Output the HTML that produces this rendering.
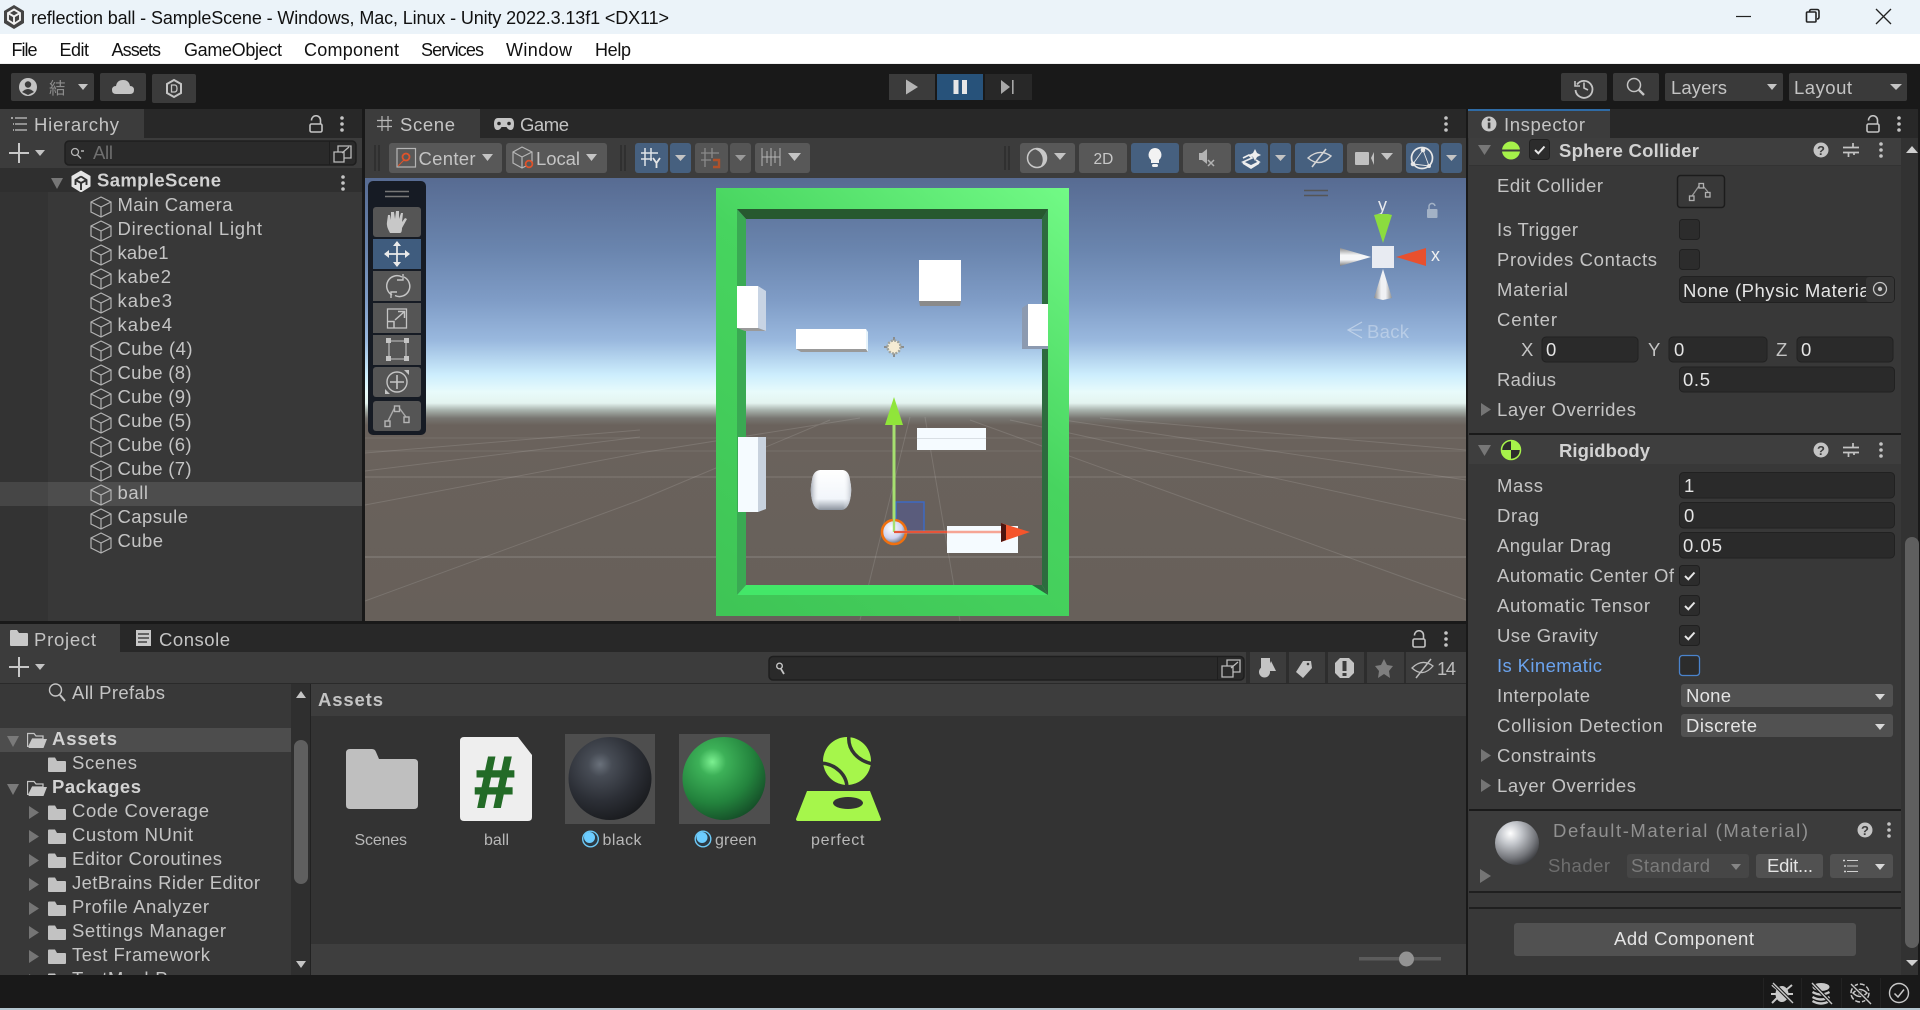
<!DOCTYPE html>
<html lang="en"><head><meta charset="utf-8"><title>reflection ball - SampleScene - Unity</title>
<style>
html,body{margin:0;padding:0;width:1920px;height:1010px;overflow:hidden;background:#191919}
svg{display:block;position:absolute;left:0;top:0}
text{font-family:"Liberation Sans","Noto Sans CJK JP",sans-serif;font-size:18.5px;fill:#c4c4c4}
.m{fill:#111;font-size:18px}
.b{font-weight:bold;fill:#d2d2d2}
.s{font-size:16px}
.w{fill:#e4e4e4}
.d{fill:#b8b8b8}
</style></head><body>
<svg width="1920" height="1010" viewBox="0 0 1920 1010" xmlns="http://www.w3.org/2000/svg">
<defs>
<linearGradient id="sky" gradientUnits="userSpaceOnUse" x1="0" y1="178" x2="0" y2="621">
<stop offset="0" stop-color="#576b92"/><stop offset=".163" stop-color="#6a85ae"/><stop offset=".276" stop-color="#7f9cc6"/><stop offset=".366" stop-color="#99b8de"/><stop offset=".445" stop-color="#cdeefd"/><stop offset=".483" stop-color="#e8fbfb"/><stop offset=".508" stop-color="#e4f4f0"/><stop offset=".524" stop-color="#a8b2ac"/><stop offset=".542" stop-color="#787671"/><stop offset=".558" stop-color="#6a625c"/><stop offset="1" stop-color="#67605a"/>
</linearGradient>
<linearGradient id="fr" gradientUnits="userSpaceOnUse" x1="730" y1="610" x2="1069" y2="188"><stop offset="0" stop-color="#3fc556"/><stop offset=".55" stop-color="#47d45f"/><stop offset="1" stop-color="#72fa86"/></linearGradient>
<radialGradient id="bk" cx=".38" cy=".33" r=".8"><stop offset="0" stop-color="#6a717b"/><stop offset=".18" stop-color="#474c55"/><stop offset=".55" stop-color="#2c2f36"/><stop offset="1" stop-color="#131416"/></radialGradient>
<radialGradient id="gr" cx=".36" cy=".3" r=".82"><stop offset="0" stop-color="#7cf091"/><stop offset=".2" stop-color="#3db158"/><stop offset=".6" stop-color="#23833d"/><stop offset="1" stop-color="#113f22"/></radialGradient>
<radialGradient id="mt" cx=".35" cy=".28" r=".82"><stop offset="0" stop-color="#fff"/><stop offset=".3" stop-color="#c4c7cc"/><stop offset=".7" stop-color="#74767b"/><stop offset="1" stop-color="#2d2e31"/></radialGradient>
<linearGradient id="cap" x1="0" y1="0" x2="0" y2="1"><stop offset="0" stop-color="#fff"/><stop offset=".72" stop-color="#f2f6fb"/><stop offset="1" stop-color="#8c949e"/></linearGradient>
<linearGradient id="capx" x1="0" y1="0" x2="1" y2="0"><stop offset="0" stop-color="#9aa0ab" stop-opacity=".9"/><stop offset=".22" stop-color="#fff" stop-opacity="0"/><stop offset=".8" stop-color="#fff" stop-opacity="0"/><stop offset="1" stop-color="#aab0bb" stop-opacity=".7"/></linearGradient>
<radialGradient id="bl" cx=".4" cy=".35" r=".7"><stop offset="0" stop-color="#fff"/><stop offset=".6" stop-color="#cdd2ee"/><stop offset="1" stop-color="#58606a"/></radialGradient>
<linearGradient id="cg" x1="0" y1="0" x2="0" y2="1"><stop offset="0" stop-color="#8b8b8b"/><stop offset=".4" stop-color="#f5f6f8"/><stop offset=".65" stop-color="#f5f6f8"/><stop offset="1" stop-color="#7e7e7e"/></linearGradient>
<linearGradient id="cg2" x1="0" y1="0" x2="1" y2="0"><stop offset="0" stop-color="#8b8b8b"/><stop offset=".4" stop-color="#f0f1f4"/><stop offset=".65" stop-color="#f0f1f4"/><stop offset="1" stop-color="#8e8e8e"/></linearGradient>
<clipPath id="tree"><rect x="0" y="684" width="291" height="291"/></clipPath>
<clipPath id="mat"><rect x="1679" y="276" width="187" height="27"/></clipPath>
<symbol id="cube" width="22" height="22" viewBox="0 0 22 22" overflow="visible"><path d="M11 1L21 6V16L11 21L1 16V6ZM1 6L11 11L21 6M11 11V21" fill="none" stroke="#b2b2b2" stroke-width="1.2"/></symbol>
<symbol id="fold" width="18" height="15" viewBox="0 0 18 15"><path d="M0 1.5Q0 .5 1 .5H7L9 4H17Q18 4 18 5V14Q18 15 17 15H1Q0 15 0 14Z" fill="#c2c2c2"/></symbol>
<symbol id="fopen" width="20" height="16" viewBox="0 0 20 16"><path d="M.5 15V1.5H7L9 4H16V7H5.5L1.5 15" fill="none" stroke="#c4c4c4" stroke-width="1.3"/><path d="M1.5 16L5 7H20L16.5 16Z" fill="#c8c8c8"/></symbol>
<symbol id="keb" width="6" height="18" viewBox="0 0 6 18"><circle cx="3" cy="3" r="1.8" fill="#c4c4c4"/><circle cx="3" cy="9" r="1.8" fill="#c4c4c4"/><circle cx="3" cy="15" r="1.8" fill="#c4c4c4"/></symbol>
<symbol id="lock" width="14" height="18" viewBox="0 0 14 18"><rect x="1" y="9" width="12" height="8" rx="1.5" fill="none" stroke="#c4c4c4" stroke-width="1.6"/><path d="M2.5 5.5A4.5 4.5 0 0 1 11.5 5V9" fill="none" stroke="#c4c4c4" stroke-width="1.6"/></symbol>
<symbol id="sl" width="16" height="16" viewBox="0 0 16 16"><path d="M0 5.5H16M0 10.5H16M10 1V5.5M5.5 10.5V15M11 10.5V13" fill="none" stroke="#c4c4c4" stroke-width="1.7"/></symbol>
<symbol id="chk" width="21" height="21" viewBox="0 0 21 21"><rect x=".5" y=".5" width="20" height="20" rx="3" fill="#2c2c2c" stroke="#202020"/><path d="M6 11L9.3 14.3L15.5 7.5" fill="none" stroke="#e6e6e6" stroke-width="2"/></symbol>
<symbol id="unchk" width="21" height="21" viewBox="0 0 21 21"><rect x=".5" y=".5" width="20" height="20" rx="3" fill="#2c2c2c" stroke="#202020"/></symbol>
</defs>

<!-- title bar -->
<rect width="1920" height="34" fill="#ebf3f9"/>
<path d="M14 5L24 11V23L14 29L4 23V11Z" fill="#444"/><path d="M14 9.5L20 13V20L14 24L8 20V13ZM8 13L14 16.5L20 13M14 16.5V24" fill="none" stroke="#f2f2f2" stroke-width="1.9"/>
<text class="m" x="31" y="24" textLength="638">reflection ball - SampleScene - Windows, Mac, Linux - Unity 2022.3.13f1 &lt;DX11&gt;</text>
<path d="M1736 16.5H1751" stroke="#222" stroke-width="1.2"/>
<path d="M1806.5 13Q1806.5 12 1807.5 12H1815Q1816 12 1816 13V21Q1816 22 1815 22H1807.5Q1806.5 22 1806.5 21ZM1809.5 11.5Q1809.5 9.5 1811.5 9.5H1817Q1819 9.5 1819 11.5V17Q1819 19 1817 19" fill="none" stroke="#222" stroke-width="1.6"/>
<path d="M1876 9L1891 24M1891 9L1876 24" stroke="#222" stroke-width="1.3"/>

<!-- menu -->
<rect y="34" width="1920" height="29" fill="#fff"/><rect y="63" width="1920" height="1" fill="#f0f0f0"/>
<text class="m" x="11.5" y="56" textLength="26">File</text>
<text class="m" x="59.5" y="56" textLength="29.5">Edit</text>
<text class="m" x="111.5" y="56" textLength="49.5">Assets</text>
<text class="m" x="184" y="56" textLength="98">GameObject</text>
<text class="m" x="304" y="56" textLength="95">Component</text>
<text class="m" x="421" y="56" textLength="63">Services</text>
<text class="m" x="506" y="56" textLength="66">Window</text>
<text class="m" x="595" y="56" textLength="36">Help</text>

<!-- toolbar -->
<rect y="64" width="1920" height="45" fill="#191919"/>
<rect x="11" y="73" width="83" height="28" rx="2" fill="#3b3b3b"/>
<circle cx="28" cy="87" r="9" fill="#c4c4c4"/><circle cx="28" cy="84.5" r="3.2" fill="#3b3b3b"/><path d="M22 92Q28 86 34 92L28 95Z" fill="#3b3b3b"/>
<text x="49" y="94" textLength="17" style="fill:#8c8c8c;font-size:16.5px">結</text>
<path d="M78 84H88L83 90Z" fill="#c4c4c4"/>
<rect x="100" y="73" width="46" height="28" rx="2" fill="#3b3b3b"/>
<path d="M116 94Q112 94 112 90Q112 86 116 86Q117 80 123 80Q129 80 130 86Q134 86 134 90Q134 94 130 94Z" fill="#c4c4c4"/>
<rect x="152" y="74" width="44" height="29" rx="2" fill="#3b3b3b"/>
<path d="M174 80L181 84V93L174 97L167 93V84Z" fill="none" stroke="#c4c4c4" stroke-width="2"/><path d="M171.5 85H174.5Q177 85 177 88.5Q177 92 174.5 92H171.5Z" fill="none" stroke="#c4c4c4" stroke-width="1.3"/>

<rect x="889" y="74" width="46" height="26" fill="#3b3b3b"/><path d="M906 79.5V94.5L918 87Z" fill="#b4b4b4"/>
<rect x="937" y="74" width="46" height="26" fill="#27527a"/><rect x="953.5" y="80" width="5" height="14" fill="#e6e6e6"/><rect x="962" y="80" width="5" height="14" fill="#e6e6e6"/>
<rect x="985" y="74" width="47" height="26" fill="#282828"/><path d="M1001 80V94L1010 87Z" fill="#a8a8a8"/><rect x="1012" y="80" width="1.6" height="14" fill="#a8a8a8"/>

<rect x="1561" y="73" width="46" height="28" rx="2" fill="#3a3a3a"/>
<path d="M1577 84.5A8.5 8.5 0 1 1 1575.5 90" fill="none" stroke="#c4c4c4" stroke-width="1.8"/><path d="M1575 81V86H1580" fill="none" stroke="#c4c4c4" stroke-width="1.6"/><path d="M1584 82.5V88L1588 90" fill="none" stroke="#c4c4c4" stroke-width="1.6"/>
<rect x="1613" y="73" width="46" height="28" rx="2" fill="#3a3a3a"/>
<circle cx="1634" cy="85" r="6.5" fill="none" stroke="#c4c4c4" stroke-width="1.5"/><path d="M1639 90L1644 95" stroke="#c4c4c4" stroke-width="2.4"/>
<rect x="1665" y="73" width="118" height="28" rx="2" fill="#3a3a3a"/><text x="1671" y="94" textLength="56">Layers</text><path d="M1767 84H1777L1772 90Z" fill="#c4c4c4"/>
<rect x="1789" y="73" width="118" height="28" rx="2" fill="#3a3a3a"/><text x="1794" y="94" textLength="58">Layout</text><path d="M1890 84H1902L1896 90Z" fill="#c4c4c4"/>

<!-- hierarchy -->
<rect x="0" y="109" width="362" height="29" fill="#282828"/>
<rect x="0" y="109" width="144" height="29" fill="#3c3c3c"/>
<path d="M15 118H27M15 124H27M15 130H27" stroke="#c4c4c4" stroke-width="1.2"/><path d="M11 118H13M13 124H14M13 130H14" stroke="#c4c4c4" stroke-width="1.6"/>
<text x="34" y="131" textLength="85">Hierarchy</text>
<use href="#lock" x="309" y="115"/><use href="#keb" x="339" y="115"/>
<rect y="138" width="362" height="30" fill="#3c3c3c"/>
<path d="M9 153H29M19 143V163" stroke="#c8c8c8" stroke-width="2"/><path d="M35 150H45L40 156Z" fill="#c4c4c4"/>
<rect x="65" y="141" width="291" height="24" rx="4" fill="#2a2a2a" stroke="#1e1e1e" stroke-width="1.5"/>
<circle cx="75" cy="152" r="3.5" fill="none" stroke="#b5b5b5" stroke-width="1.3"/><path d="M77.5 155L81 158.5M81 151H84" stroke="#b5b5b5" stroke-width="1.4"/>
<text x="93" y="159" textLength="20" style="fill:#6f6f6f">All</text>
<rect x="329" y="141" width="1" height="24" fill="#1e1e1e"/>
<path d="M338 146H351V158H344V152H338ZM334 152H344V162H334Z M342 153L349 147" fill="none" stroke="#bbb" stroke-width="1.3"/>
<rect y="168" width="362" height="24" fill="#2f2f2f"/>
<path d="M51 178H63L57 189Z" fill="#777"/>
<path d="M81 170.5L90.5 176V186.5L81 192.5L71.5 186.5V176Z" fill="#e4e4e4"/><path d="M81 176.5L75.5 180V185M81 176.5L86.5 180V185M75.5 180L81 183L86.5 180M81 183V190" fill="none" stroke="#2f2f2f" stroke-width="1.9"/>
<text class="b" x="97" y="186.5" textLength="124">SampleScene</text>
<use href="#keb" x="340" y="174"/>
<rect y="192" width="362" height="429" fill="#383838"/><rect y="192" width="48" height="429" fill="#333"/>
<rect y="482" width="362" height="24" fill="#4d4d4d"/><rect y="482" width="48" height="24" fill="#464646"/>
<use href="#cube" x="90" y="196"/><text x="117.5" y="211" textLength="115">Main Camera</text>
<use href="#cube" x="90" y="220"/><text x="117.5" y="235" textLength="144.5">Directional Light</text>
<use href="#cube" x="90" y="244"/><text x="117.5" y="259" textLength="51">kabe1</text>
<use href="#cube" x="90" y="268"/><text x="117.5" y="283" textLength="53.5">kabe2</text>
<use href="#cube" x="90" y="292"/><text x="117.5" y="307" textLength="54.5">kabe3</text>
<use href="#cube" x="90" y="316"/><text x="117.5" y="331" textLength="54.5">kabe4</text>
<use href="#cube" x="90" y="340"/><text x="117.5" y="355" textLength="75">Cube (4)</text>
<use href="#cube" x="90" y="364"/><text x="117.5" y="379" textLength="74">Cube (8)</text>
<use href="#cube" x="90" y="388"/><text x="117.5" y="403" textLength="74">Cube (9)</text>
<use href="#cube" x="90" y="412"/><text x="117.5" y="427" textLength="74">Cube (5)</text>
<use href="#cube" x="90" y="436"/><text x="117.5" y="451" textLength="74">Cube (6)</text>
<use href="#cube" x="90" y="460"/><text x="117.5" y="475" textLength="74">Cube (7)</text>
<use href="#cube" x="90" y="484"/><text x="117.5" y="499" textLength="30.5">ball</text>
<use href="#cube" x="90" y="508"/><text x="117.5" y="523" textLength="70.5">Capsule</text>
<use href="#cube" x="90" y="532"/><text x="117.5" y="547" textLength="45.5">Cube</text>

<!-- scene tabs -->
<rect x="365" y="109" width="1101" height="29" fill="#282828"/>
<rect x="365" y="109" width="115" height="29" fill="#3c3c3c"/>
<path d="M382 116V131M388 116V131M377 120.5H392M377 126.5H392" stroke="#b8b8b8" stroke-width="1.2"/>
<text x="400" y="131" textLength="55">Scene</text>
<path d="M498 118H510Q514 118 514 124Q514 130 510.5 130Q508 130 506.5 127H501.5Q500 130 497.5 130Q494 130 494 124Q494 118 498 118Z" fill="#c4c4c4"/><circle cx="499" cy="123.5" r="1.8" fill="#282828"/><circle cx="509" cy="123.5" r="1.8" fill="#282828"/>
<text x="520" y="131" textLength="49">Game</text>
<use href="#keb" x="1443" y="115"/>

<!-- scene toolbar -->
<rect x="365" y="138" width="1101" height="40" fill="#3c3c3c"/>
<path d="M375 145V171M379 145V171M621 145V171M625 145V171M1005 146V170M1009 146V170" stroke="#2d2d2d" stroke-width="1.5"/>
<rect x="389" y="143" width="113" height="30" rx="3" fill="#585858"/>
<rect x="397" y="148.5" width="18.5" height="18.5" fill="none" stroke="#b5b5b5" stroke-width="1.2"/><circle cx="406" cy="157" r="3.5" fill="none" stroke="#e0532a" stroke-width="1.8"/><path d="M398 166L404 160" stroke="#e0532a" stroke-width="1.1"/>
<text x="418.5" y="165" textLength="57">Center</text><path d="M482 154H493L487.5 161Z" fill="#c4c4c4"/>
<rect x="506" y="143" width="101" height="30" rx="3" fill="#585858"/>
<path d="M522 147L532 152V163L522 168L513 163V152ZM513 152L522 157L532 152M522 157V168" fill="none" stroke="#b5b5b5" stroke-width="1.2"/><circle cx="529" cy="164" r="3.4" fill="#585858" stroke="#e0532a" stroke-width="1.7"/>
<text x="536" y="165" textLength="44">Local</text><path d="M586 154H597L591.5 161Z" fill="#c4c4c4"/>

<rect x="635" y="143" width="33" height="30" rx="3" fill="#46607f"/><rect x="670" y="143" width="21" height="30" rx="3" fill="#46607f"/>
<path d="M645 148V166M651 148V161M641 153H658M641 159H652" stroke="#dfe4e9" stroke-width="1.5"/><path d="M653 158L656.5 163L660 158M656.5 163V168" fill="none" stroke="#e6e6e6" stroke-width="1.8"/>
<path d="M675 155H686L680.5 161Z" fill="#c4c4c4"/>
<rect x="695" y="143" width="33" height="30" rx="3" fill="#555"/><rect x="730" y="143" width="21" height="30" rx="3" fill="#555"/>
<path d="M705 148V167M712 148V158M701 153H719M701 160H711" stroke="#8a8a8a" stroke-width="1.3"/><path d="M713 160H719V167H713" fill="none" stroke="#b0512a" stroke-width="2.4"/>
<path d="M735 155H746L740.5 161Z" fill="#9a9a9a"/>
<rect x="755" y="143" width="55" height="30" rx="3" fill="#585858"/>
<path d="M762 148V166M767 151V163M771 148V166M775 151V163M780 148V166M762 157H780" stroke="#b5b5b5" stroke-width="1"/><path d="M788 153H801L794.5 161Z" fill="#c4c4c4"/>

<rect x="1020" y="143" width="55" height="30" rx="3" fill="#585858"/><circle cx="1037" cy="158" r="9.5" fill="none" stroke="#c8c8c8" stroke-width="1.5"/><path d="M1034 149A9.5 9.5 0 0 1 1040 167A11 11 0 0 0 1034 149Z" fill="#c8c8c8"/><path d="M1054 153H1066L1060 160Z" fill="#c4c4c4"/>
<rect x="1079" y="143" width="48" height="30" rx="3" fill="#585858"/><text x="1093.5" y="164" style="fill:#c8c8c8;font-size:15.5px">2D</text>
<rect x="1131" y="143" width="48" height="30" rx="3" fill="#46607f"/><path d="M1155 148A6.8 6.8 0 0 1 1159 160V163H1151V160A6.8 6.8 0 0 1 1155 148Z" fill="#f2f2f2"/><rect x="1152" y="164" width="6" height="3" rx="1.5" fill="#f2f2f2"/>
<rect x="1183" y="143" width="48" height="30" rx="3" fill="#585858"/><path d="M1199 153H1202L1207 149V164L1202 160H1199Z" fill="#b3b3b3"/><path d="M1208 160L1214 166M1214 160L1208 166" stroke="#b3b3b3" stroke-width="1.5"/>
<rect x="1235" y="143" width="33" height="30" rx="3" fill="#46607f"/><rect x="1270" y="143" width="21" height="30" rx="3" fill="#46607f"/>
<path d="M1255 149L1257 153L1261 155L1257 157L1255 161L1253 157L1249 155L1253 153Z" fill="#eee"/><path d="M1243 158L1249 155L1252 158L1243 162L1251 166L1259 162L1256 160M1243 163L1251 168L1259 163" fill="none" stroke="#eee" stroke-width="1.7"/>
<path d="M1275 155H1286L1280.5 161Z" fill="#c4c4c4"/>
<rect x="1295" y="143" width="48" height="30" rx="3" fill="#46607f"/><path d="M1308 158Q1319 148 1331 156Q1320 168 1308 158Z" fill="none" stroke="#d6d6d6" stroke-width="1.4"/><path d="M1312 167L1326 149" stroke="#d6d6d6" stroke-width="1.6"/>
<rect x="1347" y="143" width="55" height="30" rx="3" fill="#585858"/><rect x="1355" y="152" width="14" height="13" rx="1" fill="#c0c0c0"/><path d="M1371 158L1374 152V165Z" fill="#c0c0c0"/><path d="M1381 153H1393L1387 160Z" fill="#c4c4c4"/>
<rect x="1406" y="143" width="33" height="30" rx="3" fill="#46607f"/><rect x="1441" y="143" width="21" height="30" rx="3" fill="#46607f"/>
<circle cx="1422" cy="158" r="10.5" fill="none" stroke="#e8e8e8" stroke-width="1.7"/><path d="M1423 150L1413 164L1429 166L1423 150" fill="none" stroke="#e8e8e8" stroke-width=".9"/><circle cx="1423" cy="150" r="2.3" fill="#e8e8e8"/><circle cx="1413" cy="164" r="2.3" fill="#e8e8e8"/><circle cx="1429" cy="166" r="2" fill="#e8e8e8"/>
<path d="M1446 155H1457L1451.5 161Z" fill="#c4c4c4"/>

<!-- scene view -->
<rect x="365" y="178" width="1101" height="443" fill="url(#sky)"/>
<g stroke="#fff" stroke-opacity=".12" stroke-width="1" fill="none">
<path d="M365 453L640 430M365 471L640 437M365 505L640 453L860 418M365 601L640 500L830 420M860 620L910 417"/>
<path d="M1466 450L1100 418M1466 480L1050 418M1466 520L1010 420M1466 600L970 420M960 621L925 417"/>
<path d="M365 438H1466M365 451H1466" stroke-opacity=".09"/>
<path d="M365 477H1466" stroke-opacity=".13" stroke-width="1.2"/>
<path d="M365 557H1466" stroke-opacity=".13" stroke-width="1.8"/>
</g>
<!-- back walls -->
<polygon points="737,209 1048,209 1042,219 746,219" fill="#27592f"/>
<polygon points="737,209 746,219 746,585 737,595" fill="#3aa953"/>
<polygon points="1048,209 1042,219 1042,585 1048,595" fill="#2d6b3e"/>
<polygon points="737,595 746,585 1042,585 1048,595" fill="#43e768"/>
<polygon points="1032,585 1042,585 1048,595" fill="#2d6b3e"/>
<path d="M716 188H1069V616H716ZM737 209V595H1048V209Z" fill="url(#fr)" fill-rule="evenodd"/>
<!-- cubes -->
<polygon points="919,301 961,301 960,306 920,306" fill="#8a8a8a"/><rect x="919" y="260" width="42" height="41" fill="#fff"/>
<polygon points="758,286 766,291 766,331 758,328" fill="#c8d4e4"/><polygon points="737,328 758,328 766,331 745,331" fill="#9a9a9a"/><rect x="737" y="286" width="21" height="42" fill="#fff"/>
<polygon points="1028,304 1022,308 1022,349 1048,349 1048,346 1028,346" fill="#8c9ab0"/><rect x="1028" y="304" width="20" height="42" fill="#fff"/>
<polygon points="796,349 866,349 868,352 801,352" fill="#999"/><polygon points="866,329 868,332 868,352 866,349" fill="#e6f3fb"/><rect x="796" y="329" width="70" height="20" fill="#fff"/>
<rect x="917" y="428" width="69" height="22" fill="#f5fbff"/><rect x="917" y="438" width="69" height="1" fill="#d9dfe4"/>
<polygon points="758,437 766,437 766,509 758,512" fill="#c8d2de"/><rect x="738" y="437" width="20" height="75" fill="#f5fbff"/>
<path id="capsule" d="M820 470H843Q849 471 850 480Q852.5 490 850 500Q848 509 842 510H820Q814 509 812 500Q809.5 490 812 480Q813 471 820 470Z" fill="url(#cap)"/>
<path d="M820 470H843Q849 471 850 480Q852.5 490 850 500Q848 509 842 510H820Q814 509 812 500Q809.5 490 812 480Q813 471 820 470Z" fill="url(#capx)"/>
<rect x="947" y="526" width="71" height="27" fill="#f5fbff"/>
<!-- sun -->
<g stroke="#8a8d8e" stroke-width="2"><path d="M894 337V342M894 352V357M884 347H889M899 347H904"/></g><circle cx="894" cy="347" r="6.5" fill="#f5ecd4" stroke="#9fa39d" stroke-width="2.4" stroke-dasharray="2 1.4"/>
<!-- move gizmo -->
<rect x="896" y="502" width="28" height="30" fill="#5a5c7c" stroke="#3a6ac8" stroke-width="1.4"/>
<path d="M894 532V425" stroke="#a6e070" stroke-width="3"/>
<polygon points="894,397 903,425 885,425" fill="#90e53a"/>
<circle cx="894" cy="532" r="12" fill="url(#bl)" stroke="#f0700f" stroke-width="2.6"/>
<path d="M894 532V512" stroke="#a6e070" stroke-width="2.4"/>
<path d="M894 532H1002" stroke="#f6a595" stroke-width="2.6"/><path d="M894 532H947" stroke="#e5553a" stroke-width="2"/>
<polygon points="1001,523 1030,532 1001,542" fill="#f4552c"/><polygon points="1001,523 1006,525 1006,540 1001,542" fill="#4d1510"/>
<!-- tool panel -->
<rect x="368" y="181" width="58" height="254" rx="5" fill="#161b24"/>
<path d="M385 191.5H409M385 196.5H409" stroke="#777" stroke-width="1.4"/>
<rect x="373" y="207" width="48" height="30" rx="3" fill="#555"/><rect x="373" y="239" width="48" height="30" fill="#3f5c7e"/><rect x="373" y="271" width="48" height="30" fill="#555"/><rect x="373" y="303" width="48" height="30" fill="#555"/><rect x="373" y="335" width="48" height="30" fill="#555"/><rect x="373" y="367" width="48" height="30" rx="3" fill="#555"/><rect x="373" y="401" width="48" height="30" rx="3" fill="#555"/>
<path d="M390 233Q386 226 387 222L388 215L390 215L391 220L391 212L394 212L395 219L396 211L399 211L399 219L401 213L403 213L402 222L405 218L407 219L402 228Q402 233 400 233Z" fill="#c8c8c8"/>
<g fill="none" stroke="#eaeaea" stroke-width="1.7"><path d="M385 254H409M397 242V266"/></g><path d="M397 241L393 246H401ZM397 267L393 262H401ZM384 254L389 250V258ZM410 254L405 250V258Z" fill="#eaeaea"/>
<path d="M402 277A10 10 0 0 0 392 295" fill="none" stroke="#c4c4c4" stroke-width="1.5"/><path d="M393 295.5A10 10 0 0 0 402 277" fill="none" stroke="#c4c4c4" stroke-width="1.5" transform="translate(2 0)"/><path d="M403 274V280H397M391 298V292H397" fill="none" stroke="#c4c4c4" stroke-width="1.4"/>
<rect x="387.5" y="309" width="19" height="19" fill="none" stroke="#c4c4c4" stroke-width="1.3"/><path d="M387.5 321.5H394V328M395 320L404 312M398 311.5H404.5V318" fill="none" stroke="#c4c4c4" stroke-width="1.5"/>
<path d="M389 341H406V359H389Z" fill="none" stroke="#c4c4c4" stroke-width="1.1"/><g fill="#c4c4c4"><rect x="386" y="338" width="5" height="5"/><rect x="404" y="338" width="5" height="5"/><rect x="386" y="356" width="5" height="5"/><rect x="404" y="356" width="5" height="5"/></g>
<circle cx="397" cy="382" r="10" fill="none" stroke="#c4c4c4" stroke-width="1.4"/><path d="M390 382H404M397 375V389" stroke="#c4c4c4" stroke-width="1.6"/><path d="M385 394L390 394L385 389ZM409 370L404 370L409 375Z" fill="#c4c4c4"/>
<path d="M388 421L394 409H400L406 417" fill="none" stroke="#a8a8a8" stroke-width="1.4"/><g fill="#555" stroke="#b5b5b5" stroke-width="1.4"><rect x="385" y="421" width="5" height="5.5"/><rect x="394.5" y="406" width="5" height="5.5"/><rect x="404" y="417" width="5" height="5.5"/></g>
<!-- scene gizmo -->
<path d="M1304 190.5H1328M1304 195.5H1328" stroke="#555" stroke-width="1.4"/>
<text x="1378" y="211" textLength="9" style="fill:#e8eaee;font-size:18px">y</text>
<text x="1431" y="261" textLength="9" style="fill:#f0f0f0;font-size:18px">x</text>
<rect x="1427" y="209" width="10.5" height="9" rx="1" fill="#a3b2c6"/><path d="M1429 209V207A3 3 0 0 1 1435 206" fill="none" stroke="#a3b2c6" stroke-width="1.5"/>
<polygon points="1383,243 1392,215 1388,214 1378,214 1374,215" fill="#8bdc3f"/>
<polygon points="1396,257 1426,248 1426,266" fill="#e8502e"/>
<polygon points="1371,257 1340,248 1340,266" fill="url(#cg)"/>
<polygon points="1383,269 1392,298 1383,300 1374,298" fill="url(#cg2)"/>
<rect x="1372" y="246" width="22" height="22" fill="#e8ebf2"/>
<path d="M1362 322L1348 330L1362 338M1348 330H1362" fill="none" stroke="#fff" stroke-opacity=".4" stroke-width="1.2"/>
<text x="1367" y="338" textLength="42" style="fill:#fff;fill-opacity:.33">Back</text>

<!-- project -->
<rect y="624" width="1466" height="28" fill="#282828"/>
<rect y="624" width="120" height="28" fill="#3c3c3c"/>
<path d="M10 631Q10 630 11 630H17L19 633H27Q28 633 28 634V645Q28 646 27 646H11Q10 646 10 645Z" fill="#c8c8c8"/>
<text x="34" y="646" textLength="62">Project</text>
<rect x="136" y="630" width="15" height="16" fill="#c8c8c8"/><path d="M138 634H149M138 638H149M138 642H147" stroke="#282828" stroke-width="1.2"/>
<text x="159" y="646" textLength="71">Console</text>
<use href="#lock" x="1412" y="630"/><use href="#keb" x="1443" y="630"/>
<rect y="652" width="1466" height="31" fill="#3c3c3c"/><rect y="683" width="1466" height="1" fill="#2a2a2a"/>
<path d="M9 667H29M19 657V677" stroke="#c8c8c8" stroke-width="2"/><path d="M35 664H45L40 670Z" fill="#c4c4c4"/>
<rect x="769" y="656.5" width="475" height="23.5" rx="4" fill="#2a2a2a" stroke="#1e1e1e" stroke-width="1.5"/>
<circle cx="779.5" cy="666" r="2.8" fill="none" stroke="#c4c4c4" stroke-width="1.4"/><path d="M781 669L784 674" stroke="#c4c4c4" stroke-width="1.8"/>
<rect x="1217" y="657" width="1" height="23" fill="#1e1e1e"/>
<path d="M1227 660H1240V672H1233V666H1227ZM1222 666H1233V677H1222ZM1231 668L1238 662" fill="none" stroke="#bbb" stroke-width="1.3"/>
<rect x="1246" y="652" width="4" height="31" fill="#2d2d2d"/><rect x="1286" y="652" width="3" height="31" fill="#2d2d2d"/><rect x="1325" y="652" width="3" height="31" fill="#2d2d2d"/><rect x="1364" y="652" width="3" height="31" fill="#2d2d2d"/><rect x="1404" y="652" width="2" height="31" fill="#2d2d2d"/>
<rect x="1261" y="658" width="9" height="11" fill="#c4c4c4"/><circle cx="1264.5" cy="672" r="5.5" fill="#c4c4c4"/><path d="M1271 661L1276 671H1267Z" fill="#c4c4c4"/>
<path d="M1303 661L1311 661L1312 668L1303 678L1296 672Z" fill="#c4c4c4"/><circle cx="1308" cy="664" r="1.3" fill="#3c3c3c"/>
<path d="M1340 658H1349L1354 663V673L1349 678H1340L1335 673V663Z" fill="#c4c4c4"/><rect x="1342.5" y="661" width="4" height="10" fill="#3c3c3c"/><rect x="1342.5" y="673" width="4" height="3" fill="#3c3c3c"/>
<path d="M1384 659L1387 665L1393 666L1389 671L1390 678L1384 674L1378 678L1379 671L1375 666L1381 665Z" fill="#7e7e7e"/>
<path d="M1412 668Q1422 658 1433 666Q1423 678 1412 668Z" fill="none" stroke="#bbb" stroke-width="1.3"/><path d="M1416 678L1431 659" stroke="#bbb" stroke-width="1.5"/>
<text x="1437" y="675" textLength="19" style="fill:#bcbcbc">14</text>

<rect y="684" width="291" height="291" fill="#383838"/>
<rect x="291" y="684" width="19" height="291" fill="#2f2f2f"/>
<rect x="294" y="740" width="14" height="144" rx="7" fill="#5f5f5f"/>
<path d="M301 691L296 698H306ZM296 961H306L301 968Z" fill="#c4c4c4"/>
<rect x="310" y="684" width="1" height="291" fill="#222"/>
<rect x="311" y="684" width="1155" height="32" fill="#3d3d3d"/>
<text class="b" x="318" y="706" textLength="65" style="fill:#c4c4c4">Assets</text>
<rect x="311" y="716" width="1155" height="228" fill="#333"/>
<rect x="311" y="944" width="1155" height="31" fill="#3e3e3e"/>

<circle cx="55.5" cy="690" r="6" fill="none" stroke="#c4c4c4" stroke-width="1.4"/><path d="M60 695L65 701" stroke="#c4c4c4" stroke-width="2"/>
<text x="72" y="699" textLength="93">All Prefabs</text>
<rect y="728" width="291" height="24" fill="#4d4d4d"/>
<path d="M7 736H19L13 747Z" fill="#7a7a7a"/><use href="#fopen" x="27" y="732"/>
<text class="b" x="52" y="745" textLength="65">Assets</text>
<use href="#fold" x="48" y="757"/><text x="72" y="769" textLength="65">Scenes</text>
<path d="M7 784H19L13 795Z" fill="#7a7a7a"/><use href="#fopen" x="27" y="780"/>
<text class="b" x="52" y="793" textLength="89">Packages</text>
<g fill="#757575"><path d="M29 806V819L39 812.5Z"/><path d="M29 830V843L39 836.5Z"/><path d="M29 854V867L39 860.5Z"/><path d="M29 878V891L39 884.5Z"/><path d="M29 902V915L39 908.5Z"/><path d="M29 926V939L39 932.5Z"/><path d="M29 950V963L39 956.5Z"/></g>
<use href="#fold" x="48" y="805"/><text x="72" y="817" textLength="137">Code Coverage</text>
<use href="#fold" x="48" y="829"/><text x="72" y="841" textLength="121">Custom NUnit</text>
<use href="#fold" x="48" y="853"/><text x="72" y="865" textLength="150">Editor Coroutines</text>
<use href="#fold" x="48" y="877"/><text x="72" y="889" textLength="188">JetBrains Rider Editor</text>
<use href="#fold" x="48" y="901"/><text x="72" y="913" textLength="137">Profile Analyzer</text>
<use href="#fold" x="48" y="925"/><text x="72" y="937" textLength="154">Settings Manager</text>
<use href="#fold" x="48" y="949"/><text x="72" y="961" textLength="138">Test Framework</text>
<g clip-path="url(#tree)"><path d="M29 974V987L39 980.5Z" fill="#757575"/><use href="#fold" x="48" y="973"/><text x="72" y="985" textLength="113">TextMeshPro</text></g>

<path d="M346 753Q346 749 350 749H372Q375 749 376 752L379 759H414Q418 759 418 763V805Q418 809 414 809H350Q346 809 346 805Z" fill="#bfbfbf"/>
<text class="s d" x="354.5" y="845" textLength="52.5">Scenes</text>
<path d="M464 737H518L532 755V817Q532 821 528 821H464Q460 821 460 817V741Q460 737 464 737Z" fill="#eee"/>
<text x="494.5" y="807" text-anchor="middle" stroke="#236b27" stroke-width="2" style="fill:#236b27;font-weight:bold;font-size:72px">#</text>
<text class="s d" x="484" y="845" textLength="25">ball</text>
<rect x="565" y="734" width="90" height="90" fill="#4e4e4e"/><circle cx="610" cy="778.5" r="41.5" fill="url(#bk)"/>
<circle cx="590.5" cy="839" r="7.8" fill="#2c3a44" stroke="#6cc8f5" stroke-width="1.4"/><circle cx="589.5" cy="837.5" r="5.5" fill="#6ccdff"/>
<text class="s d" x="602.5" y="845" textLength="39">black</text>
<rect x="679" y="734" width="91" height="90" fill="#4e4e4e"/><circle cx="724" cy="778.5" r="41.5" fill="url(#gr)"/>
<circle cx="703" cy="839" r="7.8" fill="#2c3a44" stroke="#6cc8f5" stroke-width="1.4"/><circle cx="702" cy="837.5" r="5.5" fill="#6ccdff"/>
<text class="s d" x="715" y="845" textLength="41.5">green</text>
<circle cx="847" cy="761" r="24" fill="#a6f64b"/>
<path d="M849 735C847 750 858 761 873 764M821 763C836 764 847 775 847 788" fill="none" stroke="#333" stroke-width="3.5"/>
<path d="M807 791H870L881 819Q881 821 879 821H798Q796 821 796 819Z" fill="#a6f64b"/><ellipse cx="848" cy="803" rx="15" ry="6" fill="#333"/>
<text class="s d" x="811" y="845" textLength="53.5">perfect</text>
<rect x="1359" y="957" width="82" height="3.5" fill="#5c5c5c"/><ellipse cx="1406.5" cy="959" rx="7.5" ry="7.5" fill="#939393"/>

<!-- inspector -->
<rect x="1468" y="109" width="450" height="29" fill="#282828"/>
<rect x="1468" y="110" width="142" height="28" fill="#3c3c3c"/><rect x="1468" y="109" width="142" height="2" fill="#2f6ba5"/>
<circle cx="1489" cy="124" r="7.5" fill="#c8c8c8"/><rect x="1487.8" y="122.5" width="2.6" height="6" fill="#3c3c3c"/><circle cx="1489" cy="119.8" r="1.5" fill="#3c3c3c"/>
<text x="1504" y="131" textLength="81">Inspector</text>
<use href="#lock" x="1866" y="115"/><use href="#keb" x="1896" y="115"/>
<rect x="1468" y="138" width="433" height="837" fill="#383838"/>
<rect x="1901" y="138" width="17" height="837" fill="#323232"/>
<path d="M1912 146L1906 153H1918ZM1906 960H1918L1912 966Z" fill="#d0d0d0"/>
<rect x="1905" y="537" width="14" height="411" rx="7" fill="#5f5f5f"/>

<rect x="1469" y="138" width="432" height="27" fill="#3e3e3e"/><rect x="1469" y="165" width="432" height="1" fill="#333"/>
<path d="M1478 145H1491L1484.5 155Z" fill="#777"/>
<circle cx="1511" cy="150.5" r="9" fill="#a6f24a"/><path d="M1502 150.5H1520" stroke="#3e3e3e" stroke-width="2"/>
<use href="#chk" x="1529" y="139"/>
<text class="b" x="1559" y="157" textLength="140">Sphere Collider</text>
<circle cx="1821" cy="150" r="7.5" fill="#c4c4c4"/><text x="1821" y="155" text-anchor="middle" style="fill:#3e3e3e;font-weight:bold;font-size:13px">?</text>
<use href="#sl" x="1843" y="142"/><use href="#keb" x="1878" y="141"/>

<text x="1497" y="192" textLength="106">Edit Collider</text>
<rect x="1677.5" y="175.5" width="47" height="32" rx="3" fill="#383838" stroke="#1c1c1c" stroke-width="1.5"/>
<path d="M1692 196L1699 186H1703L1708 192" fill="none" stroke="#999" stroke-width="1.3"/><g fill="#383838" stroke="#b0b0b0" stroke-width="1.3"><rect x="1689.5" y="196" width="4.5" height="4.5"/><rect x="1699" y="183.5" width="4.5" height="4.5"/><rect x="1705.5" y="192.5" width="4.5" height="4.5"/></g>
<text x="1497" y="236" textLength="81">Is Trigger</text><use href="#unchk" x="1679" y="219"/>
<text x="1497" y="266" textLength="160">Provides Contacts</text><use href="#unchk" x="1679" y="249"/>
<text x="1497" y="296" textLength="71">Material</text>
<rect x="1679.5" y="276.5" width="215" height="26" rx="4" fill="#2a2a2a" stroke="#212121"/>
<text class="w" clip-path="url(#mat)" x="1683" y="297" textLength="198">None (Physic Material)</text>
<rect x="1866" y="277" width="28" height="25" rx="3" fill="#363636"/><circle cx="1880" cy="289" r="6.5" fill="none" stroke="#c4c4c4" stroke-width="1.3"/><circle cx="1880" cy="289" r="2.2" fill="#c4c4c4"/>
<text x="1497" y="326" textLength="60">Center</text>
<text x="1521" y="356" textLength="12">X</text><rect x="1542" y="337" width="96" height="25" rx="4" fill="#2a2a2a" stroke="#212121"/><text class="w" x="1546" y="356" textLength="10">0</text>
<text x="1648" y="356" textLength="11">Y</text><rect x="1669" y="337" width="98" height="25" rx="4" fill="#2a2a2a" stroke="#212121"/><text class="w" x="1674" y="356" textLength="10">0</text>
<text x="1776" y="356" textLength="11">Z</text><rect x="1797" y="337" width="96" height="25" rx="4" fill="#2a2a2a" stroke="#212121"/><text class="w" x="1801" y="356" textLength="10">0</text>
<text x="1497" y="386" textLength="59">Radius</text>
<rect x="1679.5" y="367" width="215" height="25" rx="4" fill="#2a2a2a" stroke="#212121"/><text class="w" x="1683" y="386" textLength="27">0.5</text>
<path d="M1481 403V416L1491 409.5Z" fill="#757575"/><text x="1497" y="416" textLength="139">Layer Overrides</text>
<rect x="1469" y="433" width="432" height="2" fill="#1a1a1a"/>

<rect x="1469" y="435" width="432" height="29" fill="#3e3e3e"/>
<path d="M1478 445H1491L1484.5 456Z" fill="#777"/>
<circle cx="1511" cy="450" r="9" fill="#292929" stroke="#a6f24a" stroke-width="2"/><path d="M1511 441A9 9 0 0 1 1520 450H1511ZM1511 459A9 9 0 0 1 1502 450H1511Z" fill="#a6f24a"/><path d="M1511 441A9 9 0 0 0 1502 450H1511ZM1511 459A9 9 0 0 0 1520 450H1511Z" fill="#2c2c2c"/><circle cx="1511" cy="450" r="9.5" fill="none" stroke="#a6f24a" stroke-width="1.5"/>
<text class="b" x="1559" y="457" textLength="91">Rigidbody</text>
<circle cx="1821" cy="450" r="7.5" fill="#c4c4c4"/><text x="1821" y="455" text-anchor="middle" style="fill:#3e3e3e;font-weight:bold;font-size:13px">?</text>
<use href="#sl" x="1843" y="442"/><use href="#keb" x="1878" y="441"/>

<text x="1497" y="492" textLength="46">Mass</text><rect x="1679.5" y="472.5" width="215" height="25.5" rx="4" fill="#2a2a2a" stroke="#212121"/><text class="w" x="1684" y="492" textLength="8">1</text>
<text x="1497" y="522" textLength="42">Drag</text><rect x="1679.5" y="502.5" width="215" height="25.5" rx="4" fill="#2a2a2a" stroke="#212121"/><text class="w" x="1684" y="522" textLength="10">0</text>
<text x="1497" y="552" textLength="114">Angular Drag</text><rect x="1679.5" y="532.5" width="215" height="25.5" rx="4" fill="#2a2a2a" stroke="#212121"/><text class="w" x="1683" y="552" textLength="39">0.05</text>
<text x="1497" y="582" textLength="177">Automatic Center Of</text><use href="#chk" x="1679" y="565"/>
<text x="1497" y="612" textLength="153">Automatic Tensor</text><use href="#chk" x="1679" y="595"/>
<text x="1497" y="642" textLength="101">Use Gravity</text><use href="#chk" x="1679" y="625"/>
<text x="1497" y="672" textLength="105" style="fill:#6ba3ee">Is Kinematic</text><rect x="1679.5" y="655.5" width="20" height="20" rx="3" fill="#2c2c2c" stroke="#4a83cc" stroke-width="1.3"/>
<text x="1497" y="702" textLength="93">Interpolate</text>
<rect x="1681" y="684" width="212" height="23" rx="3" fill="#515151"/><text class="w" x="1686" y="702" textLength="45">None</text><path d="M1875 694H1885L1880 700Z" fill="#d8d8d8"/>
<text x="1497" y="732" textLength="166">Collision Detection</text>
<rect x="1681" y="714" width="212" height="23" rx="3" fill="#515151"/><text class="w" x="1686" y="732" textLength="71">Discrete</text><path d="M1875 724H1885L1880 730Z" fill="#d8d8d8"/>
<path d="M1481 749V762L1491 755.5Z" fill="#757575"/><text x="1497" y="762" textLength="99">Constraints</text>
<path d="M1481 779V792L1491 785.5Z" fill="#757575"/><text x="1497" y="792" textLength="139">Layer Overrides</text>
<rect x="1469" y="809" width="432" height="2" fill="#1a1a1a"/>
<rect x="1469" y="811" width="432" height="80" fill="#3c3c3c"/>
<circle cx="1517" cy="843" r="22" fill="url(#mt)"/>
<text x="1553" y="837" textLength="255" style="fill:#919191">Default-Material (Material)</text>
<circle cx="1865" cy="830" r="7.5" fill="#c4c4c4"/><text x="1865" y="835" text-anchor="middle" style="fill:#3c3c3c;font-weight:bold;font-size:13px">?</text>
<use href="#keb" x="1886" y="821"/>
<path d="M1480 869V883L1491 876Z" fill="#757575"/>
<text x="1548" y="872" textLength="62" style="fill:#6e6e6e">Shader</text>
<rect x="1627" y="854" width="122" height="24" rx="3" fill="#464646"/><text x="1631" y="872" textLength="79" style="fill:#7b7b7b">Standard</text><path d="M1731 864H1741L1736 870Z" fill="#858585"/>
<rect x="1756" y="854" width="67" height="24" rx="3" fill="#515151"/><text class="w" x="1767" y="872" textLength="46">Edit...</text>
<rect x="1830" y="854" width="63" height="24" rx="3" fill="#515151"/><path d="M1847 860.5H1858M1847 866H1858M1847 871.5H1858" stroke="#d0d0d0" stroke-width="1.1"/><path d="M1843 860.5H1845M1844 866H1846M1844 871.5H1846" stroke="#d0d0d0" stroke-width="1.6"/><path d="M1875 864H1885L1880 870Z" fill="#d8d8d8"/>
<rect x="1469" y="891" width="432" height="2" fill="#1f1f1f"/><rect x="1469" y="907" width="432" height="2" fill="#1f1f1f"/>
<rect x="1514" y="923" width="342" height="33" rx="3" fill="#515151"/>
<text class="w" x="1614" y="945" textLength="140">Add Component</text>

<!-- status bar -->
<rect y="975" width="1920" height="33" fill="#191919"/>
<rect y="1008" width="1920" height="2" fill="#b3c5cf"/>
<g fill="#232323"><rect x="1763" y="978" width="1" height="30"/><rect x="1801" y="978" width="1" height="30"/><rect x="1841" y="978" width="1" height="30"/><rect x="1880" y="978" width="1" height="30"/></g>
<ellipse cx="1782" cy="994" rx="6.5" ry="8" fill="#c8c8c8"/><path d="M1772 985L1778 990M1792 985L1786 990M1771 994H1776M1788 994H1793M1772 1003L1777 998M1792 1003L1787 998" stroke="#c8c8c8" stroke-width="2"/><path d="M1773 983L1793 1003" stroke="#191919" stroke-width="3.5"/><path d="M1773 983L1793 1003" stroke="#c8c8c8" stroke-width="1.4"/>
<ellipse cx="1821" cy="987" rx="8.5" ry="4" fill="#c8c8c8"/><path d="M1812.5 992Q1821 997 1829.5 992M1812.5 997Q1821 1002 1829.5 997M1812.5 1001Q1821 1006 1829.5 1001" fill="none" stroke="#c8c8c8" stroke-width="2.4"/><path d="M1812 983L1832 1004" stroke="#191919" stroke-width="3.5"/><path d="M1812 983L1832 1004" stroke="#c8c8c8" stroke-width="1.4"/>
<circle cx="1860" cy="993" r="9" fill="none" stroke="#c8c8c8" stroke-width="1.5" stroke-dasharray="5 2"/><path d="M1853 993Q1860 986 1867 993Q1860 1000 1853 993Z" fill="none" stroke="#c8c8c8" stroke-width="1.5"/><circle cx="1860" cy="993" r="2" fill="#c8c8c8"/><path d="M1851 984L1871 1004" stroke="#191919" stroke-width="3.2"/><path d="M1851 984L1871 1004" stroke="#c8c8c8" stroke-width="1.4"/>
<circle cx="1899" cy="993" r="9.5" fill="none" stroke="#c8c8c8" stroke-width="1.4"/><path d="M1894.5 993.5L1898 997L1904 989.5" fill="none" stroke="#c8c8c8" stroke-width="1.5"/>
</svg>
</body></html>
